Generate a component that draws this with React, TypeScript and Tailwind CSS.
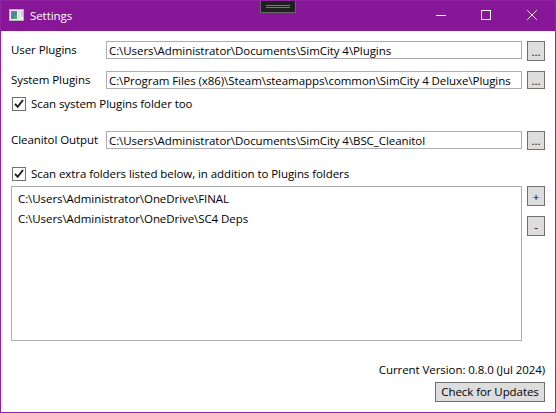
import type { ReactNode } from 'react';

function CheckBox({ children }: { children: ReactNode }) {
  return (
    <label className="flex h-[14px] items-center gap-[5px] pl-px">
      <span className="flex size-[14px] shrink-0 items-center justify-center border border-[#707070] bg-white">
        <svg width="12" height="12" viewBox="0 0 12 12" fill="none" stroke="#212121" strokeWidth="2">
          <path d="M2 5.8 4.7 8.8 10 2" />
        </svg>
      </span>
      <span className="whitespace-nowrap leading-4">{children}</span>
    </label>
  );
}

function Button({ children, className }: { children: ReactNode; className: string }) {
  return (
    <button className={`flex shrink-0 items-center justify-center whitespace-nowrap border border-[#707070] bg-[#dddddd] leading-4 ${className}`}>
      {children}
    </button>
  );
}

function PathRow({ label, value, buttonHeight }: { label: string; value: string; buttonHeight: string }) {
  return (
    <div className="flex h-[18px] items-start">
      <span className="w-[95px] shrink-0 whitespace-nowrap leading-[18px]">{label}</span>
      <div className="h-[18px] w-[416px] shrink-0 whitespace-nowrap border border-[#abadb3] pl-[2px] leading-[18px]">{value}</div>
      <Button className={`ml-[5px] w-[18px] pt-px ${buttonHeight}`}>...</Button>
    </div>
  );
}

export default function App() {
  return (
    <div className="relative flex h-[413px] w-[556px] flex-col overflow-hidden border border-[#8f25a2] bg-white font-['Open_Sans','Noto_Sans',sans-serif] text-[11.5px] tracking-[-0.07px] text-black">
      <header className="flex h-[30px] shrink-0 items-center bg-[#881798] text-white">
        <svg className="ml-2 mt-[-2px]" width="15" height="12" viewBox="0 0 15 12">
          <rect width="15" height="12" fill="#b9b3bb" />
          <rect x="1" y="1" width="13" height="10" fill="#f2f2f2" />
          <rect x="2" y="2" width="6" height="8" fill="#4c8791" />
          <path d="M2 2h6L2 8z" fill="#5187b0" />
          <path d="M4 10l4-5v5z" fill="#57a276" />
          <rect x="9" y="2" width="2" height="8" fill="#dededa" />
          <rect x="12" y="2" width="2" height="6" fill="#c9d2ce" />
        </svg>
        <span className="ml-[6px] leading-4">Settings</span>
        <svg className="ml-auto mr-[17px] mt-[-2px]" width="102" height="12" viewBox="0 0 102 12" fill="none" stroke="white">
          <path d="M0 6.5h10M45.5 1.5h9v9h-9z" shapeRendering="crispEdges" />
          <path d="M91.2 1.2l9.6 9.6M100.8 1.2l-9.6 9.6" />
        </svg>
      </header>
      <div className="absolute left-[259px] top-[-1px] flex h-[13px] w-9 flex-col items-center gap-px border border-[#686868] bg-[#202020] pt-1">
        <div className="h-px w-6 bg-[#777777]" />
        <div className="h-px w-6 bg-[#777777]" />
      </div>

      <main className="flex flex-col px-[10px] pt-[10px]">
        <div className="flex flex-col gap-3">
          <PathRow label="User Plugins" value="C:\Users\Administrator\Documents\SimCity 4\Plugins" buttonHeight="h-5" />
          <PathRow label="System Plugins" value="C:\Program Files (x86)\Steam\steamapps\common\SimCity 4 Deluxe\Plugins" buttonHeight="h-[18px]" />
        </div>
        <div className="mb-5 mt-2">
          <CheckBox>Scan system Plugins folder too</CheckBox>
        </div>
        <PathRow label="Cleanitol Output" value="C:\Users\Administrator\Documents\SimCity 4\BSC_Cleanitol" buttonHeight="h-[19px]" />
        <div className="mb-[5px] mt-[18px]">
          <CheckBox>Scan extra folders listed below, in addition to Plugins folders</CheckBox>
        </div>
        <div className="flex gap-[5px]">
          <ul className="h-[155px] w-[511px] shrink-0 border border-[#abadb3] pl-[6px] pt-[2px] leading-5">
            <li>C:\Users\Administrator\OneDrive\FINAL</li>
            <li>C:\Users\Administrator\OneDrive\SC4 Deps</li>
          </ul>
          <div className="flex flex-col gap-[10px]">
            <Button className="h-5 w-[18px] pt-[2px]">+</Button>
            <Button className="h-5 w-[18px] pt-[2px]">-</Button>
          </div>
        </div>
        <footer className="mt-[21px] flex flex-col items-end">
          <span className="whitespace-nowrap leading-4">Current Version: 0.8.0 (Jul 2024)</span>
          <Button className="mt-1 h-5 w-[110px]">Check for Updates</Button>
        </footer>
      </main>
    </div>
  );
}
